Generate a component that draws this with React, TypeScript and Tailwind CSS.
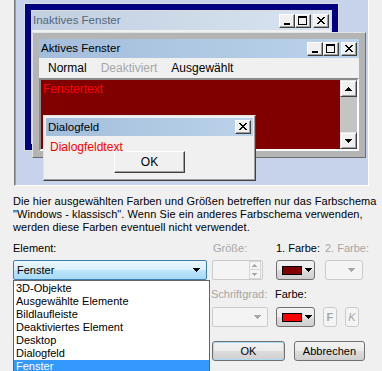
import React from "react";
import clsx from "clsx";

type Glyph = "min" | "max" | "close";

const glyphPaths: Record<Glyph, string> = {
  min: "M2 7h6v2H2z",
  max: "M0 0h9v2H0z M0 2h1v7H0z M8 2h1v7H8z M1 8h7v1H1z",
  close:
    "M1 1h2v1H1z M7 1h2v1H7z M2 2h2v1H2z M6 2h2v1H6z M3 3h4v1H3z M4 4h2v1H4z M3 5h4v1H3z M2 6h2v1H2z M6 6h2v1H6z M1 7h2v1H1z M7 7h2v1H7z",
};

const raised =
  "border border-t-white border-l-white border-r-[#404040] border-b-[#404040] bg-[#f0f0f0] shadow-[inset_-1px_-1px_0_#a0a0a0]";

const pushBtn =
  "flex items-center rounded-[3px] border border-[#707070] bg-[linear-gradient(#f2f2f2,#ebebeb_50%,#dddddd_50%,#cfcfcf)]";

const disabledBox = "flex items-center rounded-[2px] border border-[#cbcbcb] bg-[#f4f4f4]";

const CaptionButton = ({ kind, className }: { kind: Glyph; className?: string }) => (
  <div className={clsx("flex h-[14px] w-4 items-center justify-center", raised, className)}>
    <svg width="10" height="10" viewBox="0 0 10 10" shapeRendering="crispEdges">
      <path d={glyphPaths[kind]} fill="#000" />
    </svg>
  </div>
);

const CaptionButtons = ({ closeOnly = false }: { closeOnly?: boolean }) => (
  <div className="flex items-center pr-[2px]">
    {!closeOnly && <CaptionButton kind="min" />}
    {!closeOnly && <CaptionButton kind="max" />}
    <CaptionButton kind="close" className="ml-[2px]" />
  </div>
);

const Arrow = ({ color = "#000", up = false }: { color?: string; up?: boolean }) => (
  <svg width="7" height="4" viewBox="0 0 7 4" shapeRendering="crispEdges">
    <path
      d={
        up
          ? "M3 0h1v1H3z M2 1h3v1H2z M1 2h5v1H1z M0 3h7v1H0z"
          : "M0 0h7v1H0z M1 1h5v1H1z M2 2h3v1H2z M3 3h1v1H3z"
      }
      fill={color}
    />
  </svg>
);

const TinyArrow = ({ up = false }: { up?: boolean }) => (
  <svg width="5" height="3" viewBox="0 0 5 3" shapeRendering="crispEdges">
    <path d={up ? "M2 0h1v1H2z M1 1h3v1H1z M0 2h5v1H0z" : "M0 0h5v1H0z M1 1h3v1H1z M2 2h1v1H2z"} fill="#a8a8a8" />
  </svg>
);

const ScrollButton = ({ up = false }: { up?: boolean }) => (
  <div className="flex h-[17px] w-[17px] items-center justify-center border border-t-[#e3e3e3] border-l-[#e3e3e3] border-r-[#404040] border-b-[#404040] bg-[#f0f0f0] shadow-[inset_1px_1px_0_#fff,inset_-1px_-1px_0_#a0a0a0]">
    <Arrow up={up} />
  </div>
);

const ColorButton = ({ color }: { color: string }) => (
  <div className={clsx(pushBtn, "h-[20px] w-[39px] pl-[5px]")}>
    <div className="h-[9px] w-[20px] border border-black" style={{ backgroundColor: color }} />
    <div className="ml-[3px] flex">
      <Arrow />
    </div>
  </div>
);

const elements = [
  "3D-Objekte",
  "Ausgewählte Elemente",
  "Bildlaufleiste",
  "Deaktiviertes Element",
  "Desktop",
  "Dialogfeld",
  "Fenster",
];

export default function App() {
  return (
    <div className="h-[371px] w-[382px] overflow-hidden bg-[#f0f0f0] font-['Liberation_Sans',Arial,sans-serif] text-[11px] leading-[13px] text-black">
      {/* Vorschau */}
      <div className="ml-[14px] w-[355px] border-r border-b border-l border-r-white border-b-white border-l-[#7a7a7a]">
        <div className="relative h-[185px] overflow-hidden border-l border-l-[#a0a0a0] bg-[#c7d3ea]">
          {/* Inaktives Fenster */}
          <div className="absolute top-[3px] left-[8px] h-[148px] w-[315px] border border-[#dcdcdc] bg-[#000080] p-[6px]">
            <div className="flex h-full flex-col border border-[#dcdcdc] bg-[#f0f0f0]">
              <div className="flex h-[19px] items-center justify-between bg-linear-to-r from-[#c2cfdf] to-[#d8e4f1] pl-[1px] text-[11.5px] text-[#56667a]">
                <span>Inaktives Fenster</span>
                <CaptionButtons />
              </div>
            </div>
          </div>

          {/* Aktives Fenster */}
          <div className="absolute top-[32px] left-[16px] flex h-[126px] w-[334px] flex-col border border-t-[#e3e3e3] border-r-[#6f6f6f] border-b-[#6f6f6f] border-l-[#e3e3e3] bg-[#b4b4b4] p-[6px]">
            <div className="flex h-[19px] items-center justify-between bg-linear-to-r from-[#a3bddb] to-[#bbd3ea] pl-[2px] text-[11.5px]">
              <span>Aktives Fenster</span>
              <CaptionButtons />
            </div>
            <div className="flex h-[20px] items-center gap-[14px] bg-[#f0f0f0] pl-[9px] text-[12px]">
              <span>Normal</span>
              <span className="text-[#a6a6a6]">Deaktiviert</span>
              <span>Ausgewählt</span>
            </div>
            <div className="flex h-[73px] border-2 border-t-[#8a8a8a] border-r-white border-b-white border-l-[#8a8a8a]">
              <div className="flex-1 bg-[#800000] pt-[3px] pl-[2px] text-[12px] text-[#ff0000]">Fenstertext</div>
              <div className="flex w-[17px] flex-col justify-between bg-[#c4c4c4]">
                <ScrollButton up />
                <ScrollButton />
              </div>
            </div>
          </div>

          {/* Dialogfeld */}
          <div className="absolute top-[115px] left-[27px] flex h-[66px] w-[213px] flex-col border border-t-[#e3e3e3] border-r-[#404040] border-b-[#404040] border-l-[#e3e3e3] bg-[#f0f0f0] p-[2px] shadow-[inset_-1px_-1px_0_#a0a0a0]">
            <div className="flex h-[18px] items-center justify-between bg-linear-to-r from-[#a3bddb] to-[#bbd3ea] pl-[2px] text-[11.5px]">
              <span>Dialogfeld</span>
              <CaptionButtons closeOnly />
            </div>
            <div className="mt-[5px] pl-[4px] text-[12px] leading-[12px] text-[#ff0000]">Dialogfeldtext</div>
            <div className={clsx(raised, "mt-[-2px] ml-[68px] flex h-[22px] w-[71px] items-center justify-center text-[12px]")}>
              OK
            </div>
          </div>
        </div>
      </div>

      {/* Einstellungen */}
      <div className="px-[13px]">
        <p className="mt-[9px] whitespace-nowrap tracking-[0.07px]">
          Die hier ausgewählten Farben und Größen betreffen nur das Farbschema
          <br />
          "Windows - klassisch". Wenn Sie ein anderes Farbschema verwenden,
          <br />
          werden diese Farben eventuell nicht verwendet.
        </p>

        <div className="mt-[8px] flex">
          {/* Element */}
          <div className="relative w-[197px]">
            <div>Element:</div>
            <div className="mt-[5px] flex h-[20px] items-center justify-between rounded-[2px] border border-[#3c7fb1] bg-[linear-gradient(#eaf6fd,#d9f0fc_50%,#bee6fd_50%,#a7d9f5)] pr-[6px] pl-[3px]">
              <span>Fenster</span>
              <Arrow />
            </div>
            <div className="absolute top-[38px] left-0 w-[197px] border border-[#646464] bg-white pt-px">
              {elements.map((item) => (
                <div
                  key={item}
                  className={clsx("h-[13px] pl-[2px]", item === "Fenster" && "bg-[#3399ff] text-white")}
                >
                  {item}
                </div>
              ))}
            </div>
          </div>

          {/* Größe / Farben */}
          <div className="ml-[5px] flex flex-col">
            <div className="flex whitespace-nowrap">
              <span className="w-[64px] pl-px text-[#a6a6a6]">Größe:</span>
              <span className="w-[49px]">1. Farbe:</span>
              <span className="text-[#a6a6a6]">2. Farbe:</span>
            </div>
            <div className="mt-[5px] flex h-[20px]">
              <div className={clsx(disabledBox, "w-[51px] justify-end pr-px")}>
                <div className="flex h-[18px] w-[12px] flex-col">
                  <div className="flex h-[9px] items-center justify-center border border-[#d6d6d6]">
                    <TinyArrow up />
                  </div>
                  <div className="flex h-[9px] items-center justify-center border border-t-0 border-[#d6d6d6]">
                    <TinyArrow />
                  </div>
                </div>
              </div>
              <div className="ml-[13px]">
                <ColorButton color="#800000" />
              </div>
              <div className={clsx(disabledBox, "ml-[10px] w-[38px] justify-end rounded-[3px] pr-[7px]")}>
                <Arrow color="#a6a6a6" />
              </div>
            </div>

            <div className="mt-[8px] flex whitespace-nowrap">
              <span className="-ml-px w-[64px] text-[#a6a6a6]">Schriftgrad:</span>
              <span>Farbe:</span>
            </div>
            <div className="mt-[6px] flex h-[20px]">
              <div className={clsx(disabledBox, "w-[56px] justify-end pr-[6px]")}>
                <Arrow color="#a6a6a6" />
              </div>
              <div className="ml-[8px]">
                <ColorButton color="#ff0000" />
              </div>
              <div className={clsx(disabledBox, "ml-[8px] w-[14px] justify-center rounded-[3px] font-bold text-[#a6a6a6]")}>
                F
              </div>
              <div className={clsx(disabledBox, "ml-[8px] w-[14px] justify-center rounded-[3px] italic text-[#a6a6a6]")}>
                K
              </div>
            </div>

            <div className="mt-[14px] flex h-[20px]">
              <div className={clsx(pushBtn, "w-[73px] justify-center border-[#3c7fb1] shadow-[inset_0_0_0_1px_#a6dcf7]")}>
                OK
              </div>
              <div className={clsx(pushBtn, "ml-[9px] w-[71px] justify-center")}>Abbrechen</div>
            </div>
          </div>
        </div>
      </div>
    </div>
  );
}
